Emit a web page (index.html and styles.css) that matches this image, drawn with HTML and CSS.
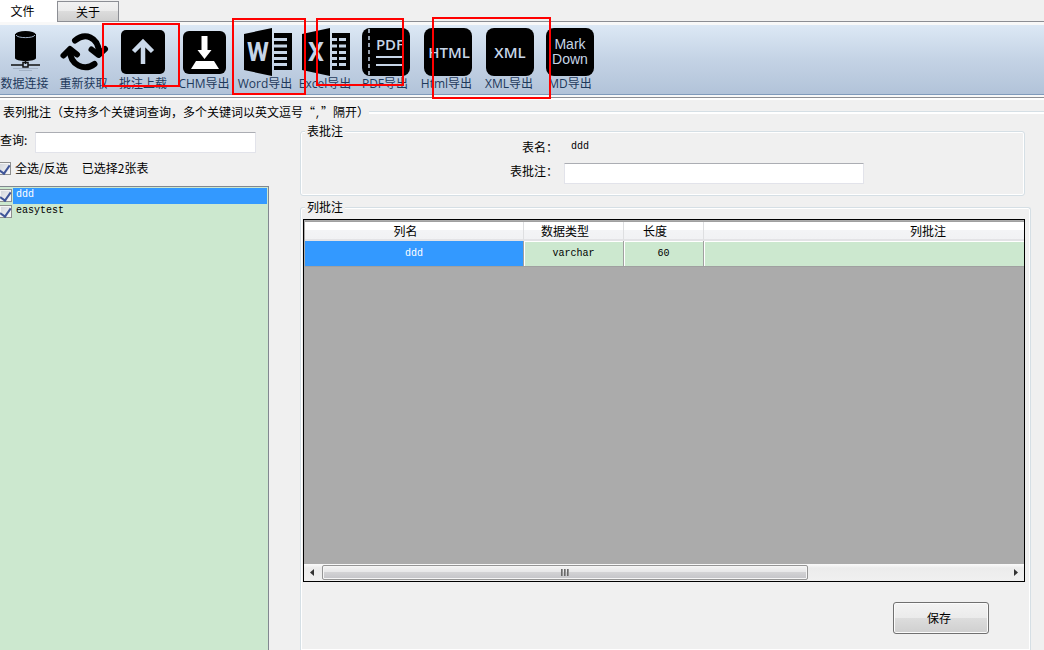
FILE: index.html
```html
<!DOCTYPE html>
<html lang="zh-CN">
<head>
<meta charset="utf-8">
<title>表列批注</title>
<link rel="stylesheet" href="styles.css">
</head>
<body>
<nav class="tabs">
  <button class="tab tab-active" type="button">文件</button>
  <button class="tab tab-idle" type="button">关于</button>
</nav>

<div class="ribbon">
  <div class="tools">
    <button class="tool" type="button">
      <svg class="icon" viewBox="0 0 48 48" aria-hidden="true">
        <path d="M14 6v24c0 4 21 4 21 0V6z"/>
        <ellipse cx="24.500" cy="6" rx="10" ry="3"/>
        <path d="M15 7c1 3.500 18 3.500 19 0" fill="none" stroke="#9fb0c6"/>
        <path d="M24.500 32v4M10 37h12M27 37h12" stroke="#111" stroke-width="1.500"/>
        <rect x="22" y="34.500" width="5" height="4.500" fill="none" stroke="#111" stroke-width="1.500"/>
        <path d="M12 40.500h25M18 42.500h13" stroke="#91a0b4" opacity=".6"/>
      </svg>
      <span>数据连接</span>
    </button>
    <button class="tool" type="button">
      <svg class="icon" viewBox="0 0 48 48" aria-hidden="true">
        <g fill="none" stroke="#000" stroke-width="6" stroke-linecap="round" stroke-linejoin="round">
          <path d="M15 12.500C25 4 38 9 39 24"/>
          <path d="M34.500 36C25 43 10 38 10 22"/>
          <path d="M31.500 21.500l7 5.500 6.500-6"/>
          <path d="M3.500 27.500l6.500-6.500 7 5.500"/>
        </g>
      </svg>
      <span>重新获取</span>
    </button>
    <button class="tool" type="button">
      <svg class="icon" viewBox="0 0 48 48" aria-hidden="true">
        <rect x="2" y="2" width="44" height="44" rx="5"/>
        <path d="M24 36V14M14.500 23.500L24 14l9.500 9.500" fill="none" stroke="#cbd9ea" stroke-width="4.500"/>
      </svg>
      <span>批注上载</span>
    </button>
    <button class="tool" type="button">
      <svg class="icon" viewBox="0 0 48 48" aria-hidden="true">
        <rect x="3" y="3" width="43" height="43" rx="6"/>
        <path d="M21.500 8h6v14h4l-7 9-7-9h4z" fill="#fff"/>
        <path d="M16 33h18l5 8H11z" fill="#fff"/>
      </svg>
      <span>CHM导出</span>
    </button>
    <button class="tool" type="button">
      <svg class="icon" viewBox="-3 0 48 48" aria-hidden="true">
        <path d="M0 6L28 0v48L0 42z"/>
        <path d="M30 5h18v37H30z"/>
        <path d="M30 11.500h13M30 18h13M30 24.500h13M30 30.500h13M30 36.500h13" stroke="#c6d5e7" stroke-width="3"/>
        <text class="glyph glyph-bold" x="14" y="33">W</text>
      </svg>
      <span>Word导出</span>
    </button>
    <button class="tool" type="button">
      <svg class="icon" viewBox="-1 0 48 48" aria-hidden="true">
        <path d="M0 6L28 0v48L0 42z"/>
        <path d="M30 5h18v37H30z"/>
        <path d="M30 11.500h5M37 11.500h7M30 18h5M37 18h7M30 24.500h5M37 24.500h7M30 30.500h5M37 30.500h7M30 36.500h5M37 36.500h7" stroke="#c6d5e7" stroke-width="3"/>
        <text class="glyph glyph-bold" x="14" y="33">X</text>
      </svg>
      <span>Excel导出</span>
    </button>
    <button class="tool" type="button">
      <svg class="icon" viewBox="-1 0 48 48" aria-hidden="true">
        <rect width="48" height="48" rx="8"/>
        <path d="M7 1v46" stroke="#c6d5e7" stroke-width="1.500" stroke-dasharray="4 3"/>
        <path d="M14 29h27M14 37h27" stroke="#c6d5e7" stroke-width="2"/>
        <text class="glyph glyph-code" x="28" y="22">PDF</text>
      </svg>
      <span>PDF导出</span>
    </button>
    <button class="tool" type="button">
      <svg class="icon" viewBox="-1 0 48 48" aria-hidden="true">
        <rect width="48" height="48" rx="8"/>
        <text class="glyph glyph-code" x="25" y="30">HTML</text>
      </svg>
      <span>Html导出</span>
    </button>
    <button class="tool" type="button">
      <svg class="icon" viewBox="-1 0 48 48" aria-hidden="true">
        <rect width="48" height="48" rx="8"/>
        <text class="glyph glyph-code" x="24" y="30">XML</text>
      </svg>
      <span>XML导出</span>
    </button>
    <button class="tool" type="button">
      <svg class="icon" viewBox="0 0 48 48" aria-hidden="true">
        <rect width="48" height="48" rx="8"/>
        <text class="glyph glyph-md" x="24" y="21">Mark</text>
        <text class="glyph glyph-md" x="24" y="36">Down</text>
      </svg>
      <span>MD导出</span>
    </button>
  </div>
  <div class="mark mark-upload"></div>
  <div class="mark mark-word"></div>
  <div class="mark mark-pdf"></div>
  <div class="mark mark-html"></div>
</div>

<main class="workspace">
  <h1 class="heading"><span>表列批注（支持多个关键词查询，多个关键词以英文逗号“<span class="mono">,</span>”隔开）</span></h1>
  <div class="columns">
    <section class="sidebar">
      <div class="search">
        <label for="query">查询:</label>
        <input class="field" id="query" type="text">
      </div>
      <div class="selection">
        <label class="check-label"><input class="check" type="checkbox" checked>全选/反选</label>
        <span>已选择2张表</span>
      </div>
      <ul class="list">
        <li><label class="item item-selected"><input class="check" type="checkbox" checked><span class="item-name">ddd</span></label></li>
        <li><label class="item"><input class="check" type="checkbox" checked><span class="item-name">easytest</span></label></li>
      </ul>
    </section>

    <section class="details">
      <fieldset class="group table-group">
        <legend>表批注</legend>
        <div class="form">
          <span class="form-label">表名：</span>
          <output class="mono table-name">ddd</output>
          <label class="form-label" for="note">表批注：</label>
          <input class="field" id="note" type="text">
        </div>
      </fieldset>

      <fieldset class="group column-group">
        <legend>列批注</legend>
        <div class="grid">
          <div class="grid-view">
            <table class="data">
              <colgroup><col class="c-name"><col class="c-type"><col class="c-length"><col class="c-note"></colgroup>
              <thead><tr><th>列名</th><th>数据类型</th><th>长度</th><th>列批注</th></tr></thead>
              <tbody><tr><td class="cell-selected">ddd</td><td>varchar</td><td>60</td><td></td></tr></tbody>
            </table>
          </div>
          <div class="scrollbar">
            <svg class="arrow" viewBox="0 0 17 17" aria-hidden="true"><path d="M10 5v7L6 8.500z"/></svg>
            <div class="track"><div class="thumb"><i></i><i></i><i></i></div></div>
            <svg class="arrow" viewBox="0 0 17 17" aria-hidden="true"><path d="M7 5v7l4-3.500z"/></svg>
          </div>
        </div>
        <div class="actions"><button class="save" type="button">保存</button></div>
      </fieldset>
    </section>
  </div>
</main>
</body>
</html>
```

FILE: styles.css
```css
* { box-sizing: border-box; }

body {
  margin: 0;
  height: 100vh;
  display: flex;
  flex-direction: column;
  overflow: hidden;
  background: #f0f0f0;
  color: #000;
  font: 12px/16px "Noto Sans CJK SC", sans-serif;
}

button, input { font: inherit; color: inherit; }

.mono { font-family: "Liberation Mono", monospace; font-size: 10px; }

/* Tabs */
.tabs {
  display: flex;
  align-items: stretch;
  height: 22px;
  background: linear-gradient(#8c8e94, #8c8e94) bottom / 100% 1px no-repeat;
}
.tab { padding: 0; border: 0; }
.tab-active { width: 57px; padding-right: 12px; background: #fff; }
.tab-idle {
  width: 62px;
  margin-top: 1px;
  border: 1px solid #8c8e94;
  background: linear-gradient(#f2f2f2, #ebebeb 50%, #dcdcdc 50%, #cfcfcf);
}

/* Toolbar */
.ribbon {
  position: relative;
  padding: 3px 0 2px;
  border-bottom: 1px solid #8c8e94;
  background: #f8f8f8;
  box-shadow: 0 2px #fff;
}
.tools {
  display: grid;
  grid-template-columns: 59px 59px 60px 62px 60px 60px 60px 63px 62px 60px;
  padding: 3px 0 2px;
  background: linear-gradient(#dce8f5, #c4d3e5 50%, #b2c3d9);
  border-bottom: 1px solid #7f9abb;
}
.tool {
  display: flex;
  flex-direction: column;
  align-items: center;
  margin-left: -5px;
  margin-right: 5px;
  padding: 0;
  border: 0;
  background: none;
  color: #1e395b;
  font-family: "Open Sans", "Noto Sans CJK SC", sans-serif;
  white-space: nowrap;
}
.icon { width: 48px; height: 48px; overflow: visible; }
.glyph { fill: #c6d5e7; text-anchor: middle; font-family: "Open Sans", sans-serif; }
.glyph-bold { font-family: Roboto, sans-serif; font-size: 25px; font-weight: 700; }
.glyph-code { font-size: 15px; font-weight: 600; }
.glyph-md { font-family: "Liberation Sans", sans-serif; font-size: 14px; }

.mark { position: absolute; border: 2px solid #f00; pointer-events: none; }
.mark-upload { left: 102px; top: 1px; width: 78px; height: 64px; }
.mark-word { left: 232px; top: -4px; width: 74px; height: 77px; }
.mark-pdf { left: 316px; top: -4px; width: 88px; height: 68px; }
.mark-html { left: 432px; top: -5px; width: 119px; height: 82px; z-index: 1; }

/* Workspace */
.workspace {
  flex: 1;
  min-height: 0;
  display: flex;
  flex-direction: column;
  padding-top: 6px;
}
.heading {
  display: flex;
  align-items: center;
  margin: 0;
  padding-left: 3px;
  font-size: 12px;
  font-weight: 400;
}
.heading .mono { line-height: 1; }
.heading::after {
  content: "";
  flex: 1;
  height: 2px;
  border-top: 1px solid #d5dfe5;
  background: #fff;
}
.columns { flex: 1; min-height: 0; display: flex; gap: 31px; }

.field {
  width: 100%;
  height: 21px;
  padding: 0 4px;
  border: 1px solid #e2e3ea;
  border-top-color: #abadb3;
  border-radius: 1px;
  background: #fff;
}

/* Sidebar */
.sidebar {
  width: 269px;
  flex: none;
  display: flex;
  flex-direction: column;
  padding-top: 12px;
}
.search { display: flex; gap: 5px; padding-right: 13px; }
.search label { flex: none; width: 30px; }
.selection { display: flex; gap: 14px; padding: 7px 0 10px; }
.check-label { display: flex; align-items: center; gap: 4px; }
.check {
  appearance: none;
  flex: none;
  display: grid;
  place-items: center;
  width: 13px;
  height: 13px;
  margin: 0 0 0 -2px;
  border: 1px solid #8e8f8f;
  background: linear-gradient(135deg, #cfd3da, #fafafa);
  box-shadow: inset 0 0 0 1px #f4f4f4;
}
.check:checked::after {
  content: "";
  width: 5px;
  height: 9px;
  margin-bottom: 2px;
  border: solid #3f5598;
  border-width: 0 2px 2px 0;
  transform: rotate(35deg);
}
.list {
  flex: 1;
  margin: 0;
  padding: 1px 1px 0 0;
  border: 1px solid #828790;
  border-width: 1px 1px 0 0;
  background: #cce8cf;
  list-style: none;
}
.item { display: flex; align-items: flex-start; gap: 1px; height: 16px; }
.item .check { margin: 1px 0 0 -1px; }
.item-name {
  flex: 1;
  height: 16px;
  padding-left: 3px;
  font: 10px/14px "Liberation Mono", monospace;
}
.item-selected .item-name { background: #3399ff; color: #fff; }

/* Details */
.details {
  flex: 1;
  min-width: 0;
  display: flex;
  flex-direction: column;
  padding-top: 3px;
}
.group {
  min-width: 0;
  margin: 0;
  padding: 0 2px;
  border: 1px solid #d5dfe5;
  border-radius: 3px;
  box-shadow: inset 0 0 0 1px #fff;
}
.group legend { margin-left: 2px; padding: 0 2px; background: #f0f0f0; }
.table-group { margin-right: 19px; padding-bottom: 11px; }
.form {
  display: grid;
  grid-template-columns: 255px minmax(0, 300px);
  gap: 8px 6px;
  align-items: start;
}
.form-label { text-align: right; }
.table-name { padding-left: 7px; }
.column-group {
  flex: 1;
  min-height: 0;
  display: flex;
  flex-direction: column;
  margin: 3px 13px 0 0;
  padding: 4px 5px 0 2px;
  border-bottom: 0;
  border-radius: 3px 3px 0 0;
}
.grid {
  flex: 1;
  min-height: 0;
  display: flex;
  flex-direction: column;
  border: 1px solid #000;
  background: #ababab;
}
.grid-view { flex: 1; min-height: 0; overflow: hidden; padding: 1px 0 0 1px; }
.data {
  width: 865px;
  table-layout: fixed;
  border-collapse: separate;
  border-spacing: 0;
  border-top: 1px solid #a0a0a0;
}
.c-name { width: 219px; }
.c-type { width: 100px; }
.c-length { width: 80px; }
.data th {
  height: 19px;
  padding: 0 17px 0 0;
  border-right: 1px solid #dedfe1;
  border-bottom: 2px solid #e3e3e6;
  background: linear-gradient(#fff 45%, #f3f4f6 50%, #f1f2f4);
  font-weight: 400;
  line-height: 16px;
}
.data td {
  height: 26px;
  padding: 0;
  border-right: 1px solid #a0a0a0;
  border-bottom: 1px solid #a0a0a0;
  background: #cce8cf;
  box-shadow: inset 1px 1px #fff;
  font: 10px/16px "Liberation Mono", monospace;
  text-align: center;
}
.data .cell-selected { background: #3399ff; color: #fff; box-shadow: none; }

.scrollbar {
  display: flex;
  height: 17px;
  background: linear-gradient(#fafafa, #ececec 4px, #f0f0f0);
}
.arrow { width: 17px; height: 17px; fill: #333; }
.track { flex: 1; padding: 1px; }
.thumb {
  display: flex;
  justify-content: center;
  align-items: center;
  gap: 1px;
  width: 71%;
  height: 15px;
  border: 1px solid #959595;
  border-radius: 2px;
  background: linear-gradient(#f4f4f4, #e7e7e8 45%, #d2d2d4 50%, #c4c4c8);
  box-shadow: inset 0 0 0 1px #f5f5f5;
}
.thumb i { width: 2px; height: 7px; background: linear-gradient(90deg, #555, #aaa); }

.actions { display: flex; justify-content: flex-end; padding: 20px 36px 16px 0; }
.save {
  width: 96px;
  height: 32px;
  padding: 0 4px 0 0;
  border: 1px solid #707070;
  border-radius: 3px;
  background: linear-gradient(#f3f3f3, #ebebeb 50%, #dddddd 50%, #cfcfcf);
  box-shadow: inset 0 0 0 1px #fbfbfb;
}
```
